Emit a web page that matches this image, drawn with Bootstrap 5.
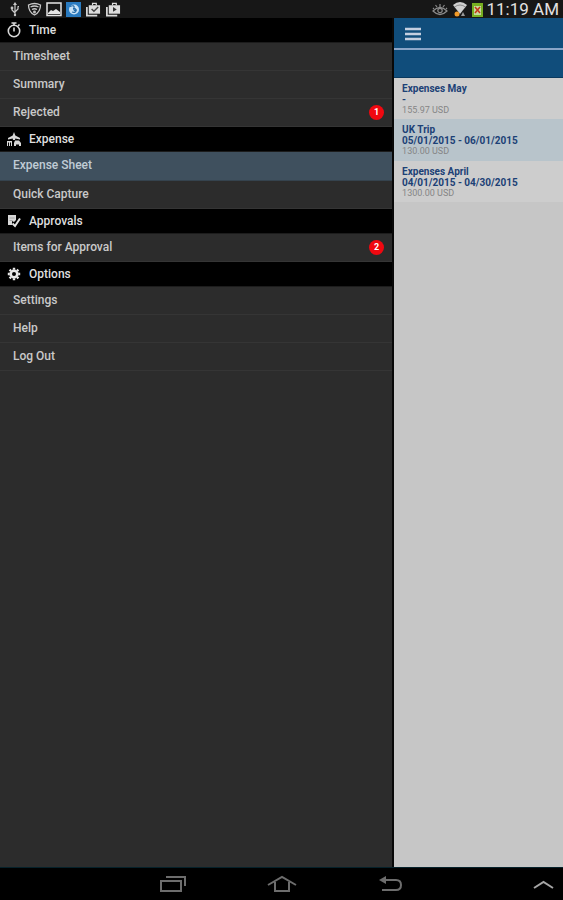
<!DOCTYPE html>
<html lang="en">
<head>
<meta charset="utf-8">
<meta name="viewport" content="width=device-width, initial-scale=1">
<title>Expense Sheet</title>
<link href="https://cdn.jsdelivr.net/npm/bootstrap@5.3.0/dist/css/bootstrap.min.css" rel="stylesheet">
<style>
  body { font-family: Roboto, "Liberation Sans", sans-serif; background: #2c2c2c; font-size: 12px; }
  .status-bar { min-height: 18px; background: #171717; color: #e2e2e2; }
  .clock { font-size: 17px; line-height: 18px; }
  .drawer { flex: 0 0 70%; background: #2c2c2c; border-right: 2px solid #080808; }
  .section-title { height: 25px; background: #000; color: #dedede; font-size: 12px; font-weight: 500; line-height: 24px; border-bottom: 1px solid #1c1c1c; padding-left: 7px; }
  .menu-row { height: 28px; line-height: 27px; padding: 0 8px 0 13px; color: #c9c9c9; font-weight: 500; border-bottom: 1px solid #353535; }
  .menu-row:hover { color: #fff; }
  .menu-row.current { height: 29px; background: #3f505e; color: #c0ccd6; border-color: #35434e; }
  .count { width: 15px; height: 15px; background: #f00810; color: #fff; font-size: 9px; line-height: 15px; font-weight: 700; text-align: center; }
  .sheet-pane { background: #c6c6c6; }
  .top-band { height: 32px; background: #104d7b; border-bottom: 2px solid #8aa5c8; padding: 2px 0 0 11px; }
  .sub-band { height: 28px; background: #104d7b; border-bottom: 1px solid #0a395e; }
  .sheet-item { padding: 5px 8px 3px; color: #1c4176; font-size: 10px; line-height: 11px; font-weight: 700; background: #cdcdcd; }
  .sheet-item.alt { background: #b8c4cb; padding-bottom: 4px; }
  .amount { color: #858585; font-size: 9px; font-weight: 400; }
  .nav-keys { height: 33px; background: #000; border-top: 1px solid #06222b; }
  .key-slot { flex: 0 0 109px; }
  svg { display: block; }
</style>
<script src="https://cdn.jsdelivr.net/npm/bootstrap@5.3.0/dist/js/bootstrap.bundle.min.js"></script>
</head>
<body class="min-vh-100 d-flex flex-column">
<header class="status-bar d-flex justify-content-between align-items-center">
  <div class="d-flex align-items-center ps-2 gap-1">
    <svg width="15" height="16" viewBox="0 0 15 16" fill="none" stroke="#c8c8c8" stroke-width="1.200"><path d="M7 3v11M4 7v2l3 3M10 6v2l-3 3"/><path d="M5 4l2-3 2 3z" fill="#c8c8c8" stroke="none"/><circle cx="7" cy="14" r="1.200" fill="#c8c8c8" stroke="none"/><circle cx="4" cy="7" r=".8"/><path d="M9.500 5.500h1.500"/></svg>
    <svg width="15" height="16" viewBox="0 0 15 16" fill="none" stroke="#c8c8c8" stroke-width="1.300"><path d="M1.500 4q6-3 12 0q0 7-6 10q-6-3-6-10z"/><path d="M3.500 6q4-2 8 0M5 8.500q2.500-1.500 5 0"/><circle cx="7.500" cy="11" r=".8"/></svg>
    <svg width="16" height="16" viewBox="0 0 16 16"><rect x="1" y="2" width="14" height="12.500" fill="#171717" stroke="#e6e6e6" stroke-width="1.500"/><path d="M2 12l3-3 2 1 3-2 4 3v2H2z" fill="#e6e6e6"/></svg>
    <svg width="15" height="16" viewBox="0 0 15 16"><rect y="1" width="15" height="15" fill="#2a7bc0"/><circle cx="8" cy="8.500" r="5" fill="#c9e2f5"/><path d="M4 5.500q5-2 4 1.500t3 2M6 11q4 1 4-1.500t-3-2" fill="none" stroke="#236ba9" stroke-width="1.200"/></svg>
    <svg width="16" height="16" viewBox="0 0 17 16"><path d="M2 6v9h11" fill="none" stroke="#ddd" stroke-width="1.800"/><path d="M4 4h12v9H4z" fill="#ddd"/><path d="M8 4V2h4v2" fill="none" stroke="#ddd" stroke-width="1.300"/><path d="M7 8l2.500 2.500L14 6" fill="none" stroke="#444" stroke-width="1.500"/></svg>
    <svg width="16" height="16" viewBox="0 0 17 16"><path d="M2 6v9h11" fill="none" stroke="#ddd" stroke-width="1.800"/><path d="M4 4h12v9H4z" fill="#ddd"/><path d="M8 4V2h4v2" fill="none" stroke="#ddd" stroke-width="1.300"/><path d="M8.500 6v5l4-2.500z" fill="#333"/></svg>
  </div>
  <div class="d-flex align-items-center gap-1 pe-1">
    <svg width="16" height="16" viewBox="0 0 16 16" fill="none" stroke="#8b8b8b" stroke-width="1.200"><path d="M1 10q7-7 14 0q-7 7-14 0z"/><circle cx="8" cy="9.500" r="2.200"/><path d="M8 3v3M3.500 4l1.500 2M12.500 4L11 6M1 7l1 1M15 7l-1 1"/></svg>
    <svg width="16" height="16" viewBox="0 0 16 16"><path d="M1 4q7-6 14 0l-7 9z" fill="#cfcfcf"/><path d="M2.500 6q5.500-4 11 0" fill="none" stroke="#777" stroke-width=".8"/><path d="M5 15l-2-3h4z" fill="#f09a28"/><circle cx="5" cy="13" r="2.500" fill="#f09a28"/><path d="M9 15l2-4 2 4z" fill="#999"/></svg>
    <svg width="11" height="15" viewBox="0 0 11 15"><path d="M0 1h11v14H0z" fill="#77ae20"/><rect x="2" y="4" width="7" height="9" fill="#c6d99b"/><path d="M3 5l5 6M8 5l-5 6" stroke="#c33316" stroke-width="1.500"/></svg>
    <span class="clock">11:19 AM</span>
  </div>
</header>
<main class="d-flex flex-grow-1">
  <nav class="drawer" aria-label="Main">
    <h2 class="section-title d-flex align-items-center gap-2 m-0">
      <svg width="14" height="16" viewBox="0 0 14 16" fill="none" stroke="#d8d8d8" stroke-width="1.600"><circle cx="7" cy="9" r="5.700"/><path d="M7 9.500V5.500M7 3V1M4.500 1h5M11 4l1.500-1.500"/></svg>Time</h2>
    <a class="menu-row d-flex text-decoration-none" href="#">Timesheet</a>
    <a class="menu-row d-flex text-decoration-none" href="#">Summary</a>
    <a class="menu-row d-flex align-items-center justify-content-between text-decoration-none" href="#">Rejected <span class="count rounded-circle">1</span></a>
    <h2 class="section-title d-flex align-items-center gap-2 m-0">
      <svg width="14" height="16" viewBox="0 0 14 16" fill="#d8d8d8"><path d="M7 1l1.300 3.500L13 7v1.500L8.300 7.500 8 9H6l-.3-1.500L1 8.500V7l4.700-2.500z"/><path d="M1 10h4v5H4v-3.500H3V15H2v-3.500H1zM0 10h1v5H0z"/><path d="M7 15v-3l1-2.500h4L14 12v3h-2v-1.500H9V15z"/></svg>Expense</h2>
    <a class="menu-row current d-flex text-decoration-none" href="#" aria-current="page">Expense Sheet</a>
    <a class="menu-row d-flex text-decoration-none" href="#">Quick Capture</a>
    <h2 class="section-title d-flex align-items-center gap-2 m-0">
      <svg width="14" height="14" viewBox="0 0 14 14"><path d="M1 1h8v5L7 8 5 7v4H1z" fill="#d8d8d8"/><path d="M2.500 4h5M2.500 6.500h3" stroke="#999" stroke-width=".8"/><path d="M5.500 9.500L8 12l5-7.500" fill="none" stroke="#e4e4e4" stroke-width="2"/></svg>Approvals</h2>
    <a class="menu-row d-flex align-items-center justify-content-between text-decoration-none" href="#">Items for Approval <span class="count rounded-circle">2</span></a>
    <h2 class="section-title d-flex align-items-center gap-2 m-0">
      <svg width="14" height="14" viewBox="0 0 14 14" fill="none" stroke="#e8e8e8"><circle cx="7" cy="7" r="3.300" stroke-width="2.600"/><path d="M7 .8v2M7 11.200v2M.8 7h2M11.200 7h2M2.600 2.600L4 4M10 10l1.400 1.400M11.400 2.600L10 4M4 10l-1.400 1.400" stroke-width="2.400"/></svg>Options</h2>
    <a class="menu-row d-flex text-decoration-none" href="#">Settings</a>
    <a class="menu-row d-flex text-decoration-none" href="#">Help</a>
    <a class="menu-row d-flex text-decoration-none" href="#">Log Out</a>
  </nav>
  <section class="sheet-pane flex-grow-1" aria-label="Expense sheets">
    <div class="top-band d-flex align-items-center">
      <button type="button" class="btn p-0 border-0 rounded-0" aria-label="Menu"><svg width="16" height="14" viewBox="0 0 16 14"><path d="M0 2h16M0 7h16M0 12h16" stroke="#c4cfe0" stroke-width="2.400"/></svg></button>
    </div>
    <div class="sub-band"></div>
    <ul class="list-unstyled m-0">
      <li class="sheet-item"><div>Expenses May</div><div>-</div><div class="amount">155.97 USD</div></li>
      <li class="sheet-item alt"><div>UK Trip</div><div>05/01/2015 - 06/01/2015</div><div class="amount">130.00 USD</div></li>
      <li class="sheet-item"><div>Expenses April</div><div>04/01/2015 - 04/30/2015</div><div class="amount">1300.00 USD</div></li>
    </ul>
  </section>
</main>
<footer class="nav-keys row g-0 align-items-center">
  <div class="col"></div>
  <div class="key-slot d-flex justify-content-center"><button type="button" class="btn p-0 border-0" aria-label="Recent apps"><svg width="28" height="18" viewBox="0 0 28 18" fill="none" stroke="#6d6d6d" stroke-width="2"><path d="M2 6h20v10H2zM7 2h19v9"/></svg></button></div>
  <div class="key-slot d-flex justify-content-center"><button type="button" class="btn p-0 border-0" aria-label="Home"><svg width="30" height="18" viewBox="0 0 30 18" fill="none" stroke="#6d6d6d" stroke-width="2"><path d="M1 10L15 2l14 8M8 7v9h14V7"/></svg></button></div>
  <div class="key-slot d-flex justify-content-center"><button type="button" class="btn p-0 border-0" aria-label="Back"><svg width="24" height="18" viewBox="0 0 24 18" fill="none" stroke="#6d6d6d" stroke-width="2"><path d="M5 5h12q5 0 5 5t-5 5H3"/><path d="M0 5l7-4v8z" fill="#6d6d6d" stroke="none"/></svg></button></div>
  <div class="col d-flex justify-content-end"><button type="button" class="btn p-0 border-0 me-2" aria-label="Expand"><svg width="23" height="14" viewBox="0 0 23 14" fill="none" stroke="#a5a5a5" stroke-width="2"><path d="M2 11l9.500-6 9.500 6"/></svg></button></div>
</footer>
</body>
</html>
